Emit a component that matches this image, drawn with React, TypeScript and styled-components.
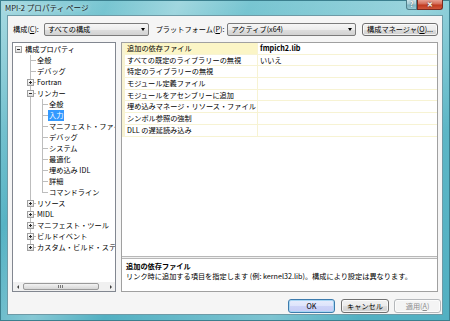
import { createGlobalStyle, styled } from 'styled-components';

const GlobalStyle = createGlobalStyle`
  html, body { margin: 0; padding: 0; }
  body {
    font-family: "Noto Sans CJK JP", "Noto Sans", sans-serif;
    font-size: 7.2px;
    color: #000;
  }
  * { box-sizing: border-box; }
`;

const Frame = styled.div`
  width: 450px;
  height: 321px;
  display: flex;
  flex-direction: column;
  padding: 0 6px 5px 6px;
  background:
    linear-gradient(115deg, rgba(255,255,255,0.35) 0%, rgba(255,255,255,0) 18%, rgba(255,255,255,0.3) 30%, rgba(255,255,255,0) 42%, rgba(255,255,255,0.25) 70%, rgba(255,255,255,0) 85%),
    linear-gradient(180deg, #79c6d2 0%, #5cb6c6 40%, #52b0c2 100%);
  border: 1px solid #3b7f8e;
`;

const TitleBar = styled.div`
  height: 14px;
  margin: 0 -6px;
  padding-left: 4px;
  display: flex;
  align-items: flex-start;
`;

const TitleText = styled.span`
  font-size: 7.6px;
  line-height: 14px;
  color: #1a1a1a;
  text-shadow: 0 0 4px rgba(255,255,255,0.9);
`;

const CaptionGroup = styled.div`
  margin-left: auto;
  margin-right: 6px;
  display: flex;
  margin-top: -1px;
`;

const CaptionButton = styled.div<{ $close?: boolean }>`
  width: ${(p) => (p.$close ? '26px' : '11px')};
  height: 10px;
  border: 1px solid ${(p) => (p.$close ? '#7a2a20' : '#4f7f8a')};
  border-top: none;
  border-radius: ${(p) => (p.$close ? '0 0 3px 0' : '0 0 0 3px')};
  background: ${(p) =>
    p.$close
      ? 'linear-gradient(180deg, #e8a092 0%, #d46a55 45%, #c0391f 55%, #d0563a 100%)'
      : 'linear-gradient(180deg, #cde7ec 0%, #a8d0d9 45%, #7fb6c3 55%, #9accd6 100%)'};
  color: #fff;
  font-size: 7px;
  font-weight: bold;
  line-height: 9px;
  text-align: center;
  text-shadow: 0 0 2px #333;
`;

const Client = styled.div`
  flex: 1;
  display: flex;
  flex-direction: column;
  background: #f5f5f5;
  border: 1px solid #6e9aa6;
  padding: 7px 4px 0 4px;
`;

const TopRow = styled.div`
  height: 13px;
  display: flex;
  align-items: center;
`;

const FieldLabel = styled.span<{ $w: number; $ml: number }>`
  width: ${(p) => p.$w}px;
  margin-left: ${(p) => p.$ml}px;
  line-height: 13px;
  white-space: nowrap;
`;

const Combo = styled.div<{ $w: number }>`
  width: ${(p) => p.$w}px;
  height: 13px;
  border: 1px solid #7b7b7b;
  border-radius: 2px;
  background: linear-gradient(180deg, #f6f6f6 0%, #ececec 50%, #dedede 51%, #d2d2d2 100%);
  display: flex;
  align-items: center;
  padding: 0 3px;
  line-height: 11px;
`;

const ComboText = styled.span`
  flex: 1;
`;

const Arrow = styled.span`
  width: 0;
  height: 0;
  border-left: 2.5px solid transparent;
  border-right: 2.5px solid transparent;
  border-top: 3px solid #000;
`;

const Button = styled.div<{ $w: number; $ml: number; $default?: boolean; $disabled?: boolean }>`
  width: ${(p) => p.$w}px;
  margin-left: ${(p) => p.$ml}px;
  height: ${(p) => (p.$default !== undefined ? 14 : 13)}px;
  border: 1px solid ${(p) => (p.$disabled ? '#b5b8bb' : p.$default ? '#3d7bad' : '#707070')};
  border-radius: 3px;
  background: ${(p) =>
    p.$disabled
      ? '#f4f4f4'
      : p.$default
      ? 'linear-gradient(180deg, #e8ecfc 0%, #dde3fb 50%, #cdd3f7 51%, #c6ccf6 100%)'
      : 'linear-gradient(180deg, #f2f2f2 0%, #ebebeb 50%, #dddddd 51%, #cfcfcf 100%)'};
  box-shadow: ${(p) => (p.$default ? 'inset 0 0 0 1px #a9d6f3' : 'inset 0 0 0 1px rgba(255,255,255,0.7)')};
  color: ${(p) => (p.$disabled ? '#8d8d8d' : '#000')};
  display: flex;
  align-items: center;
  justify-content: center;
  line-height: 11px;
  white-space: nowrap;
`;

const Panes = styled.div`
  margin-top: 6px;
  height: 250px;
  display: flex;
  gap: 5px;
`;

const TreePane = styled.div`
  width: 104px;
  border: 1px solid #828790;
  background: #fff;
  display: flex;
  flex-direction: column;
`;

const TreeBody = styled.div`
  flex: 1;
  overflow: hidden;
  padding-top: 1px;
`;

const TreeRow = styled.div`
  height: 11px;
  display: flex;
  white-space: nowrap;
`;

type Line = 'none' | 'pipe' | 'tee' | 'elbow';

const lineColor = 'linear-gradient(#bdbdbd,#bdbdbd)';
const lineBg = (l: Line) => {
  switch (l) {
    case 'pipe':
      return `${lineColor} 5px 0 / 1px 100% no-repeat`;
    case 'tee':
      return `${lineColor} 5px 0 / 1px 100% no-repeat, ${lineColor} 5px 5px / 6px 1px no-repeat`;
    case 'elbow':
      return `${lineColor} 5px 0 / 1px 6px no-repeat, ${lineColor} 5px 5px / 6px 1px no-repeat`;
    default:
      return 'none';
  }
};

const Guide = styled.div<{ $line: Line }>`
  width: 12px;
  height: 11px;
  flex: none;
  background: ${(p) => lineBg(p.$line)};
  padding: 2px 0 0 2px;
`;

const sign = 'linear-gradient(#2b2b2b,#2b2b2b)';
const Expander = styled.div<{ $open: boolean }>`
  width: 7px;
  height: 7px;
  border: 1px solid #a0a0a0;
  background: ${(p) =>
    p.$open
      ? `${sign} center / 3px 1px no-repeat, linear-gradient(#ffffff, #dcdcdc)`
      : `${sign} center / 3px 1px no-repeat, ${sign} center / 1px 3px no-repeat, linear-gradient(#ffffff, #dcdcdc)`};
`;

const NodeLabel = styled.span<{ $selected?: boolean }>`
  line-height: 11px;
  padding: 0 1px;
  margin-left: -1px;
  background: ${(p) => (p.$selected ? '#3399ff' : 'transparent')};
  color: ${(p) => (p.$selected ? '#fff' : '#000')};
`;

const HScroll = styled.div`
  height: 9px;
  display: flex;
  background: #f0f0f0;
  align-items: center;
`;

const ScrollArrow = styled.div<{ $dir: 'left' | 'right' }>`
  width: 9px;
  height: 9px;
  display: flex;
  align-items: center;
  justify-content: center;
  &::before {
    content: '';
    border-top: 2px solid transparent;
    border-bottom: 2px solid transparent;
    ${(p) => (p.$dir === 'left' ? 'border-right: 2px solid #404040;' : 'border-left: 2px solid #404040;')}
  }
`;

const Thumb = styled.div`
  width: 76px;
  height: 7px;
  margin-left: 1px;
  border: 1px solid #9a9a9a;
  border-radius: 2px;
  background:
    linear-gradient(90deg, transparent 34px, #777 34px, #777 35px, transparent 35px, transparent 36px, #777 36px, #777 37px, transparent 37px, transparent 38px, #777 38px, #777 39px, transparent 39px) 0 1px / 100% 3px no-repeat,
    linear-gradient(180deg, #f3f3f3, #d6d6d6);
`;

const ScrollTrack = styled.div`
  flex: 1;
  display: flex;
  align-items: center;
`;

const RightPane = styled.div`
  flex: 1;
  border: 1px solid #a0a0a0;
  background: #fff;
  display: flex;
  flex-direction: column;
`;

const Grid = styled.div`
  flex: 1;
`;

const GridRow = styled.div`
  height: 11.7px;
  display: flex;
  border-bottom: 1px solid #f7f3d3;
  line-height: 10.7px;
  white-space: nowrap;
`;

const Gutter = styled.div`
  width: 3px;
  background: #f7f2d2;
`;

const NameCell = styled.div<{ $active?: boolean }>`
  width: 133px;
  padding-left: 2px;
  border-right: 1px solid #f7f3d3;
  background: ${(p) => (p.$active ? '#fbf5c6' : '#fff')};
  overflow: hidden;
`;

const ValueCell = styled.div<{ $bold?: boolean }>`
  flex: 1;
  padding-left: 2px;
  font-weight: ${(p) => (p.$bold ? 'bold' : 'normal')};
`;

const Splitter = styled.div`
  height: 3px;
  border-top: 1px solid #b8b8b8;
  border-bottom: 1px solid #b8b8b8;
  background: #f0f0f0;
`;

const Desc = styled.div`
  height: 32px;
  padding: 2px 4px 0 4px;
`;

const DescTitle = styled.div`
  font-weight: bold;
  line-height: 10px;
`;

const DescText = styled.div`
  line-height: 10px;
`;

const BottomRow = styled.div`
  margin-top: 7px;
  margin-right: -3px;
  display: flex;
  justify-content: flex-end;
`;

type Node = { guides: Line[]; box?: 'plus' | 'minus'; text: string; selected?: boolean };

const tree: Node[] = [
  { guides: ['none'], box: 'minus', text: '構成プロパティ' },
  { guides: ['none', 'tee'], text: '全般' },
  { guides: ['none', 'tee'], text: 'デバッグ' },
  { guides: ['none', 'tee'], box: 'plus', text: 'Fortran' },
  { guides: ['none', 'tee'], box: 'minus', text: 'リンカー' },
  { guides: ['none', 'pipe', 'tee'], text: '全般' },
  { guides: ['none', 'pipe', 'tee'], text: '入力', selected: true },
  { guides: ['none', 'pipe', 'tee'], text: 'マニフェスト・ファイル' },
  { guides: ['none', 'pipe', 'tee'], text: 'デバッグ' },
  { guides: ['none', 'pipe', 'tee'], text: 'システム' },
  { guides: ['none', 'pipe', 'tee'], text: '最適化' },
  { guides: ['none', 'pipe', 'tee'], text: '埋め込み IDL' },
  { guides: ['none', 'pipe', 'tee'], text: '詳細' },
  { guides: ['none', 'pipe', 'elbow'], text: 'コマンドライン' },
  { guides: ['none', 'tee'], box: 'plus', text: 'リソース' },
  { guides: ['none', 'tee'], box: 'plus', text: 'MIDL' },
  { guides: ['none', 'tee'], box: 'plus', text: 'マニフェスト・ツール' },
  { guides: ['none', 'tee'], box: 'plus', text: 'ビルドイベント' },
  { guides: ['none', 'elbow'], box: 'plus', text: 'カスタム・ビルド・ステップ' },
];

const props: { name: string; value?: string }[] = [
  { name: '追加の依存ファイル', value: 'fmpich2.lib' },
  { name: 'すべての既定のライブラリーの無視', value: 'いいえ' },
  { name: '特定のライブラリーの無視' },
  { name: 'モジュール定義ファイル' },
  { name: 'モジュールをアセンブリーに追加' },
  { name: '埋め込みマネージ・リソース・ファイル' },
  { name: 'シンボル参照の強制' },
  { name: 'DLL の遅延読み込み' },
];

export default function App() {
  return (
    <>
      <GlobalStyle />
      <Frame>
        <TitleBar>
          <TitleText>MPI-2 プロパティ ページ</TitleText>
          <CaptionGroup>
            <CaptionButton>?</CaptionButton>
            <CaptionButton $close>✕</CaptionButton>
          </CaptionGroup>
        </TitleBar>
        <Client>
          <TopRow>
            <FieldLabel $w={31} $ml={1}>
              構成(<u>C</u>):
            </FieldLabel>
            <Combo $w={105}>
              <ComboText>すべての構成</ComboText>
              <Arrow />
            </Combo>
            <FieldLabel $w={72} $ml={7}>
              プラットフォーム(<u>P</u>):
            </FieldLabel>
            <Combo $w={129}>
              <ComboText>アクティブ(x64)</ComboText>
              <Arrow />
            </Combo>
            <Button $w={76} $ml={6}>
              構成マネージャ(<u>O</u>)...
            </Button>
          </TopRow>
          <Panes>
            <TreePane>
              <TreeBody>
                {tree.map((n, i) => (
                  <TreeRow key={i}>
                    {n.guides.map((g, j) => (
                      <Guide key={j} $line={g}>
                        {j === n.guides.length - 1 && n.box && <Expander $open={n.box === 'minus'} />}
                      </Guide>
                    ))}
                    <NodeLabel $selected={n.selected}>{n.text}</NodeLabel>
                  </TreeRow>
                ))}
              </TreeBody>
              <HScroll>
                <ScrollArrow $dir="left" />
                <ScrollTrack>
                  <Thumb />
                </ScrollTrack>
                <ScrollArrow $dir="right" />
              </HScroll>
            </TreePane>
            <RightPane>
              <Grid>
                {props.map((p, i) => (
                  <GridRow key={i}>
                    <Gutter />
                    <NameCell $active={i === 0}>{p.name}</NameCell>
                    <ValueCell $bold={i === 0}>{p.value}</ValueCell>
                  </GridRow>
                ))}
              </Grid>
              <Splitter />
              <Desc>
                <DescTitle>追加の依存ファイル</DescTitle>
                <DescText>リンク時に追加する項目を指定します (例: kernel32.lib)。構成により設定は異なります。</DescText>
              </Desc>
            </RightPane>
          </Panes>
          <BottomRow>
            <Button $w={47} $ml={0} $default>
              OK
            </Button>
            <Button $w={48} $ml={6} $default={false}>
              キャンセル
            </Button>
            <Button $w={47} $ml={5} $default={false} $disabled>
              適用(<u>A</u>)
            </Button>
          </BottomRow>
        </Client>
      </Frame>
    </>
  );
}
